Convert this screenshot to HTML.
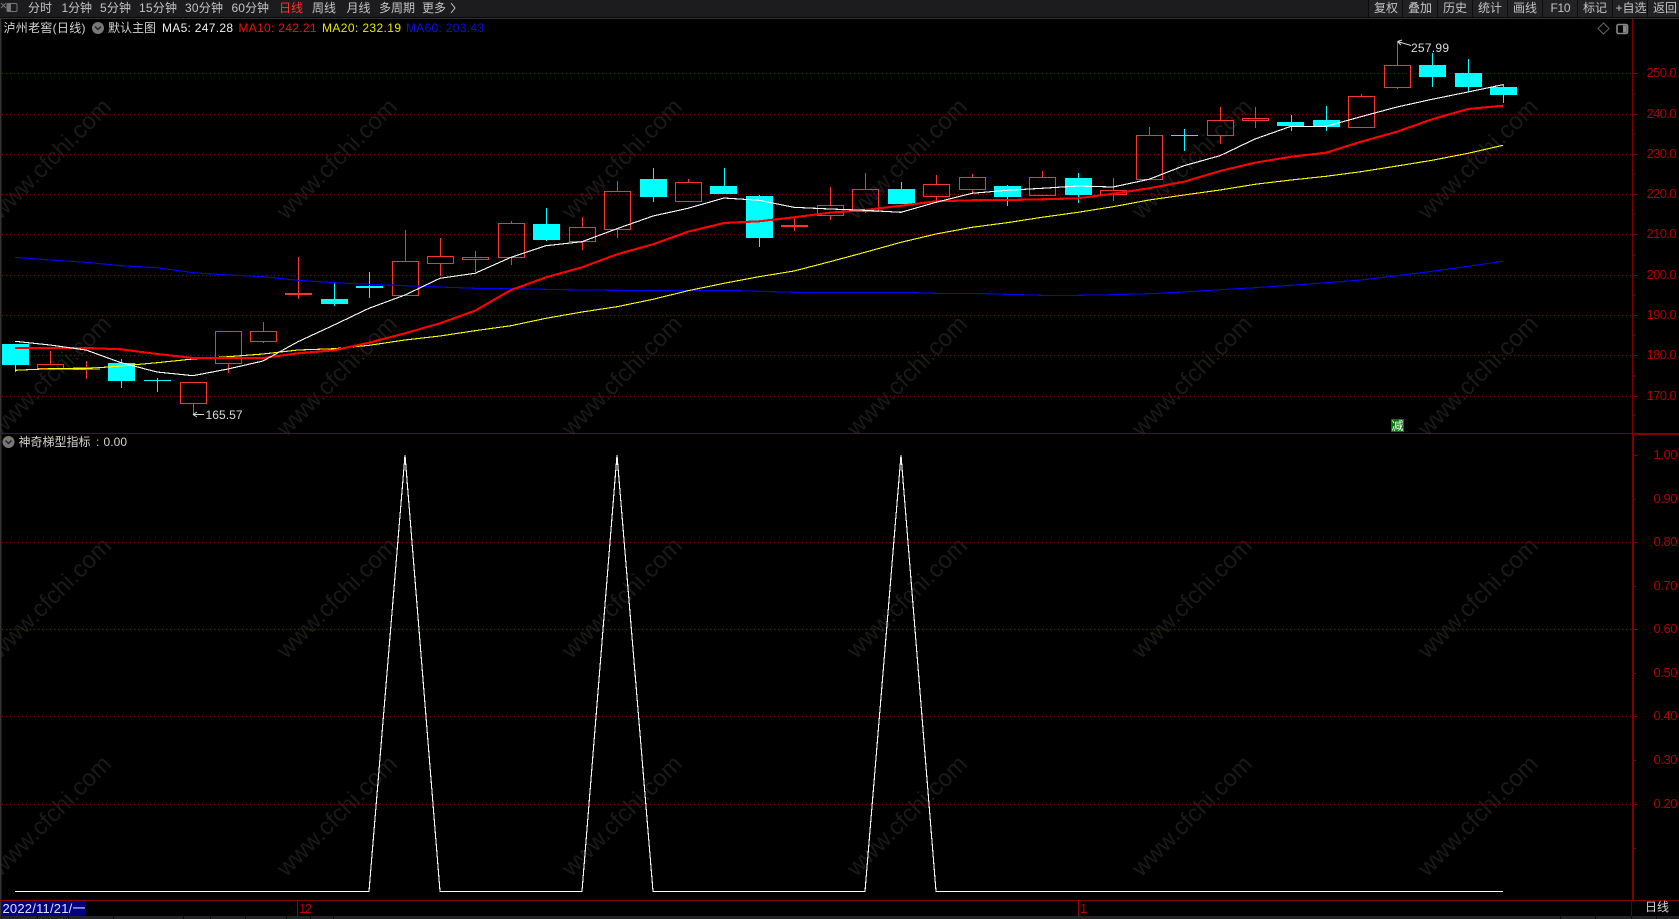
<!DOCTYPE html>
<html><head><meta charset="utf-8"><title>泸州老窖</title>
<style>
html,body{margin:0;padding:0;background:#000;width:1679px;height:919px;overflow:hidden}
svg{display:block;font-family:"Liberation Sans","Noto Sans CJK SC",sans-serif;font-size:12px}
.c{shape-rendering:crispEdges}
.wm text{font-size:24px;fill:#1a1a1a;text-anchor:middle}
.ax text{font-size:13px;fill:#b00000}
.tb text{fill:#c4c4c4}
</style></head><body>
<svg width="1679" height="919" viewBox="0 0 1679 919" xmlns="http://www.w3.org/2000/svg">
<rect width="1679" height="919" fill="#000"/>
<g class="wm">
<text x="50" y="167" transform="rotate(-45 50 158)">www.cfchi.com</text><text x="336" y="167" transform="rotate(-45 336 158)">www.cfchi.com</text><text x="621" y="167" transform="rotate(-45 621 158)">www.cfchi.com</text><text x="906" y="167" transform="rotate(-45 906 158)">www.cfchi.com</text><text x="1191" y="167" transform="rotate(-45 1191 158)">www.cfchi.com</text><text x="1477" y="167" transform="rotate(-45 1477 158)">www.cfchi.com</text>
<text x="50" y="384" transform="rotate(-45 50 375)">www.cfchi.com</text><text x="336" y="384" transform="rotate(-45 336 375)">www.cfchi.com</text><text x="621" y="384" transform="rotate(-45 621 375)">www.cfchi.com</text><text x="906" y="384" transform="rotate(-45 906 375)">www.cfchi.com</text><text x="1191" y="384" transform="rotate(-45 1191 375)">www.cfchi.com</text><text x="1477" y="384" transform="rotate(-45 1477 375)">www.cfchi.com</text>
<text x="50" y="606" transform="rotate(-45 50 597)">www.cfchi.com</text><text x="336" y="606" transform="rotate(-45 336 597)">www.cfchi.com</text><text x="621" y="606" transform="rotate(-45 621 597)">www.cfchi.com</text><text x="906" y="606" transform="rotate(-45 906 597)">www.cfchi.com</text><text x="1191" y="606" transform="rotate(-45 1191 597)">www.cfchi.com</text><text x="1477" y="606" transform="rotate(-45 1477 597)">www.cfchi.com</text>
<text x="50" y="824" transform="rotate(-45 50 815)">www.cfchi.com</text><text x="336" y="824" transform="rotate(-45 336 815)">www.cfchi.com</text><text x="621" y="824" transform="rotate(-45 621 815)">www.cfchi.com</text><text x="906" y="824" transform="rotate(-45 906 815)">www.cfchi.com</text><text x="1191" y="824" transform="rotate(-45 1191 815)">www.cfchi.com</text><text x="1477" y="824" transform="rotate(-45 1477 815)">www.cfchi.com</text>
</g>
<path class="c" fill="none" stroke="#8a0000" stroke-dasharray="1 3" d="M2 73.5H1632M2 114.5H1632M2 154.5H1632M2 194.5H1632M2 234.5H1632M2 275.5H1632M2 315.5H1632M2 355.5H1632M2 396.5H1632M2 542.5H1632M2 629.5H1632M2 716.5H1632M2 804.5H1632"/>
<path class="c" fill="none" stroke="#ff3232" d="M50.5 351V364M37.5 364.5h26v4h-26zM86.5 361V379M73.5 367.5h26v2h-26zM193.5 404V415M180.5 382.5h26v21h-26zM228.5 363V373M215.5 331.5h26v32h-26zM263.5 322V331M263.5 341V343M250.5 331.5h26v10h-26zM298.5 257V299M285 293.5h27M285 294.5h27M405.5 230V261M392.5 261.5h26v34h-26zM440.5 238V256M440.5 263V276M427.5 256.5h26v7h-26zM475.5 251V257M475.5 259V272M462.5 257.5h26v2h-26zM511.5 221V223M511.5 257V265M498.5 223.5h26v34h-26zM582.5 217V227M582.5 241V250M569.5 227.5h26v14h-26zM617.5 181V191M617.5 229V238M604.5 191.5h26v38h-26zM688.5 179V182M688.5 201V202M675.5 182.5h26v19h-26zM794.5 218V231M781 225.5h27M781 226.5h27M830.5 187V205M830.5 215V220M817.5 205.5h26v10h-26zM865.5 173V189M865.5 211V213M852.5 189.5h26v22h-26zM936.5 175V184M936.5 196V203M923.5 184.5h26v12h-26zM972.5 174V177M972.5 189V193M959.5 177.5h26v12h-26zM1042.5 171V177M1029.5 177.5h26v18h-26zM1113.5 178V190M1113.5 194V201M1100.5 190.5h26v4h-26zM1149.5 127V135M1136.5 135.5h26v44h-26zM1220.5 107V120M1220.5 136V144M1207.5 120.5h26v15h-26zM1255.5 107V118M1255.5 121V128M1242.5 118.5h26v2h-26zM1361.5 94V96M1348.5 96.5h26v31h-26zM1397.5 42V65M1397.5 87V89M1384.5 65.5h26v22h-26z"/>
<path class="c" fill="none" stroke="#00ffff" d="M15.5 365V372M121.5 359V388M157.5 378V392M144 380.5h27M334.5 283V306M369.5 272V298M546.5 208V241M653.5 168V202M724.5 168V194M759.5 195V247M901.5 182V204M1007.5 185V206M1078.5 173V203M1184.5 129V151M1291.5 115V131M1326.5 106V131M1432.5 53V87M1468.5 59V92M1503.5 84V103"/>
<path class="c" fill="#00ffff" d="M2 344h27v21h-27zM108 363h27v18h-27zM321 299h27v5h-27zM356 286h27v2h-27zM533 224h27v16h-27zM640 179h27v18h-27zM710 186h27v8h-27zM746 196h27v42h-27zM888 189h27v15h-27zM994 186h27v11h-27zM1065 178h27v17h-27zM1171 135h27v1h-27zM1277 122h27v4h-27zM1313 120h27v7h-27zM1419 65h27v12h-27zM1455 73h27v14h-27zM1490 87h27v8h-27z"/>
<polyline class="c" fill="none" stroke="#0000ff" stroke-width="1.1" points="15,257.3 50,260 86,262.3 121,265.7 157,267.7 193,272.7 228,275 263,276.7 298,280.3 334,282.7 369,284.3 405,285.7 440,287 475,288.3 511,288.7 546,289.3 582,290 617,290.3 653,290.3 688,290.3 724,290.3 759,291.3 794,292.3 830,292.3 865,292.3 901,292.3 936,293.3 972,293.3 1007,294.3 1042,295.3 1078,295.3 1113,294.7 1149,293.7 1184,292 1220,289.7 1255,287.7 1291,285.3 1326,282.7 1361,280 1397,275.7 1432,271.3 1468,266.3 1503,261.3"/>
<polyline class="c" fill="none" stroke="#ffff00" stroke-width="1.1" points="15,370.3 50,368.7 86,368.7 121,366 157,362.7 193,359 228,356.7 263,354 298,350 334,348.7 369,345.3 405,340 440,336 475,330.7 511,325.7 546,318.3 582,312 617,306.7 653,299.3 688,290.7 724,283.3 759,276.7 794,271 830,261.7 865,252.3 901,242.3 936,234 972,227.3 1007,222.7 1042,217.3 1078,212.3 1113,206.7 1149,200 1184,195 1220,190 1255,184.3 1291,180 1326,176.3 1361,171.7 1397,166 1432,160.3 1468,153.3 1503,145.3"/>
<polyline class="c" fill="none" stroke="#ff0000" stroke-width="2.1" points="15,348 50,348 86,348 121,349.3 157,354 193,358 228,358 263,358 298,353.3 334,350.3 369,342.7 405,333.3 440,323.3 475,310.7 511,290 546,277.3 582,267.3 617,254.3 653,244.3 688,231.7 724,223 759,221.3 794,217.3 830,212.7 865,210 901,205.7 936,201.3 972,200.3 1007,200 1042,199.3 1078,198.3 1113,193.7 1149,188.3 1184,181.7 1220,171 1255,162.7 1291,156.7 1326,152.7 1361,141.7 1397,131.7 1432,119.3 1468,109 1503,105.7"/>
<polyline class="c" fill="none" stroke="#ffffff" stroke-width="1.1" points="15,341.3 50,345 86,350 121,362.7 157,372 193,375.7 228,369 263,361 298,341.7 334,325 369,308.3 405,295 440,278.3 475,273.3 511,257.3 546,245.7 582,241.7 617,228.7 653,216 688,208.3 724,198 759,200.3 794,207.3 830,209 865,210.3 901,212.3 936,202.3 972,193.3 1007,190.3 1042,188.3 1078,186 1113,187 1149,179.3 1184,165.7 1220,155.7 1255,139 1291,126.3 1326,126.3 1361,116.7 1397,107 1432,99.3 1468,92 1503,84.7"/>
<polyline class="c" fill="none" stroke="#ffffff" stroke-width="1.1" points="15,891.3 369,891.3 405,455 440,891.3 582,891.3 617,455 653,891.3 865,891.3 901,455 936,891.3 1503,891.3"/>
<path fill="none" stroke="#d8d8d8" d="M1397.5 41.5L1411 45.5M1397.5 41.5L1402 40M1397.5 41.5L1401 45M193 414.5H204M193 414.5L197 412M193 414.5L197 417"/>
<text x="1411" y="52" textLength="38" fill="#dcdcdc">257.99</text>
<text x="205.5" y="419" textLength="37" fill="#dcdcdc">165.57</text>
<g class="c">
<rect y="0" width="1679" height="17" fill="#1c1c1e"/>
<rect y="17" width="1679" height="1" fill="#080808"/>
<rect y="18" width="1679" height="1" fill="#333"/>
<rect x="1369" width="310" height="17" fill="#222224"/>
<path stroke="#0c0c0c" d="M1368.5 0V17M1402.5 0V17M1437.5 0V17M1472.5 0V17M1507.5 0V17M1542.5 0V17M1577.5 0V17M1612.5 0V17M1647.5 0V17"/>
<rect x="0" y="19" width="1.5" height="897" fill="#333"/>
</g>
<path fill="none" stroke="#777" stroke-width="1" d="M1 3L6 8M6 3L1 8"/>
<rect x="7" y="3.5" width="10" height="8" rx="1" fill="none" stroke="#777"/>
<rect x="7" y="4" width="4" height="7" fill="#777"/>
<g class="tb">
<text x="28" y="12" textLength="24">分时</text>
<text x="61.5" y="12" textLength="30.5">1分钟</text>
<text x="100" y="12" textLength="31">5分钟</text>
<text x="139" y="12" textLength="38">15分钟</text>
<text x="185" y="12" textLength="38">30分钟</text>
<text x="231.5" y="12" textLength="37.5">60分钟</text>
<text x="279" y="12" textLength="24" style="fill:#ff3232">日线</text>
<text x="312" y="12" textLength="24">周线</text>
<text x="346.5" y="12" textLength="24">月线</text>
<text x="379" y="12" textLength="36">多周期</text>
<text x="422" y="12" textLength="24">更多</text>
<path d="M451 3L455 8L451 13" fill="none" stroke="#c4c4c4"/>
<text x="1374" y="12" textLength="24">复权</text>
<text x="1408" y="12" textLength="24">叠加</text>
<text x="1443" y="12" textLength="24">历史</text>
<text x="1478" y="12" textLength="24">统计</text>
<text x="1513" y="12" textLength="24">画线</text>
<text x="1550.5" y="12" textLength="20">F10</text>
<text x="1583" y="12" textLength="24">标记</text>
<text x="1615.5" y="12" textLength="31">+自选</text>
<text x="1653" y="12" textLength="24">返回</text>
</g>
<text x="3.5" y="32" textLength="82" fill="#d4d4d4">泸州老窖(日线)</text>
<circle cx="98" cy="28" r="6" fill="#777"/>
<path d="M95 26.5L98 29.5L101 26.5" fill="none" stroke="#222" stroke-width="1.4"/>
<text x="108" y="32" textLength="48" fill="#d4d4d4">默认主图</text>
<text x="162" y="32" textLength="71" fill="#f0f0f0">MA5: 247.28</text>
<text x="238.5" y="32" textLength="78" fill="#f01010">MA10: 242.21</text>
<text x="322" y="32" textLength="79" fill="#e8e800">MA20: 232.19</text>
<text x="406" y="32" textLength="78" fill="#0a10e8">MA60: 203.43</text>
<path d="M1603.5 23L1609 28.5L1603.5 34L1598 28.5Z" fill="none" stroke="#666"/>
<rect x="1617" y="24.5" width="10.5" height="9" rx="1.5" fill="none" stroke="#888" stroke-width="1.6"/>
<rect x="1623" y="25.5" width="3.5" height="7" fill="#888"/>
<circle cx="8.5" cy="442" r="6" fill="#777"/>
<path d="M5.5 440.5L8.5 443.5L11.5 440.5" fill="none" stroke="#222" stroke-width="1.4"/>
<text x="18.5" y="446" textLength="72" fill="#d4d4d4">神奇梯型指标</text>
<text x="96" y="446" fill="#d4d4d4">:</text>
<text x="103.5" y="446" textLength="23.5" fill="#d4d4d4">0.00</text>
<g class="c">
<rect x="1632" y="19" width="1" height="415" fill="#800000"/>
<rect x="1632" y="433" width="2" height="467" fill="#800000"/>
<rect x="0" y="433" width="1632" height="1" fill="#800000"/>
<rect x="1632" y="433" width="47" height="2" fill="#800000"/>
<rect x="0" y="900" width="1679" height="1" fill="#900000"/>
<rect x="1631" y="901" width="1" height="15" fill="#600000"/>
<rect x="297" y="901" width="1" height="15" fill="#a00000"/>
<rect x="1078" y="901" width="1" height="15" fill="#a00000"/>
<rect x="2" y="901" width="84" height="15" fill="#000080"/>
<rect x="0" y="916" width="1679" height="3" fill="#242426"/>
<path stroke="#0a0a0a" d="M37.5 916V919M68.5 916V919M113.5 916V919M183.5 916V919M210.5 916V919M245.5 916V919M286.5 916V919M310.5 916V919M333.5 916V919M1560.5 916V919M1595.5 916V919M1631.5 916V919M1656.5 916V919"/>
<path fill="none" stroke="#800000" d="M1633 73.5h5M1633 94h3M1633 114.5h5M1633 134h3M1633 154.5h5M1633 174h3M1633 194.5h5M1633 214h3M1633 234.5h5M1633 255h3M1633 275.5h5M1633 295h3M1633 315.5h5M1633 335h3M1633 355.5h5M1633 376h3M1633 396.5h5M1633 415h3"/>
<path fill="none" stroke="#800000" d="M1634 455.5h4M1634 499.5h2M1634 542.5h4M1634 586.5h2M1634 629.5h4M1634 673.5h2M1634 716.5h4M1634 760.5h2M1634 804.5h4M1634 848.5h2"/>
</g>
<g class="ax">
<text x="1646.5" y="77" textLength="30">250.0</text>
<text x="1646.5" y="118" textLength="30">240.0</text>
<text x="1646.5" y="158" textLength="30">230.0</text>
<text x="1646.5" y="198" textLength="30">220.0</text>
<text x="1646.5" y="238" textLength="30">210.0</text>
<text x="1646.5" y="279" textLength="30">200.0</text>
<text x="1646.5" y="319" textLength="30">190.0</text>
<text x="1646.5" y="359" textLength="30">180.0</text>
<text x="1646.5" y="400" textLength="30">170.0</text>
<text x="1653.5" y="459" textLength="24">1.00</text>
<text x="1653.5" y="503" textLength="24">0.90</text>
<text x="1653.5" y="546" textLength="24">0.80</text>
<text x="1653.5" y="590" textLength="24">0.70</text>
<text x="1653.5" y="633" textLength="24">0.60</text>
<text x="1653.5" y="677" textLength="24">0.50</text>
<text x="1653.5" y="720" textLength="24">0.40</text>
<text x="1653.5" y="764" textLength="24">0.30</text>
<text x="1653.5" y="808" textLength="24">0.20</text>
</g>
<rect class="c" x="1391" y="419" width="13" height="13" fill="#007a00"/>
<text x="1391.5" y="430" font-size="12" fill="#fff">减</text>
<text x="2.5" y="913" textLength="83" font-size="13" fill="#e0e0ff">2022/11/21/一</text>
<text x="299" y="913" textLength="13" font-size="13" fill="#c00000">12</text>
<text x="1080" y="913" font-size="13" fill="#c00000">1</text>
<text x="1645" y="911" textLength="24" fill="#d4d4d4">日线</text>
</svg>
</body></html>
